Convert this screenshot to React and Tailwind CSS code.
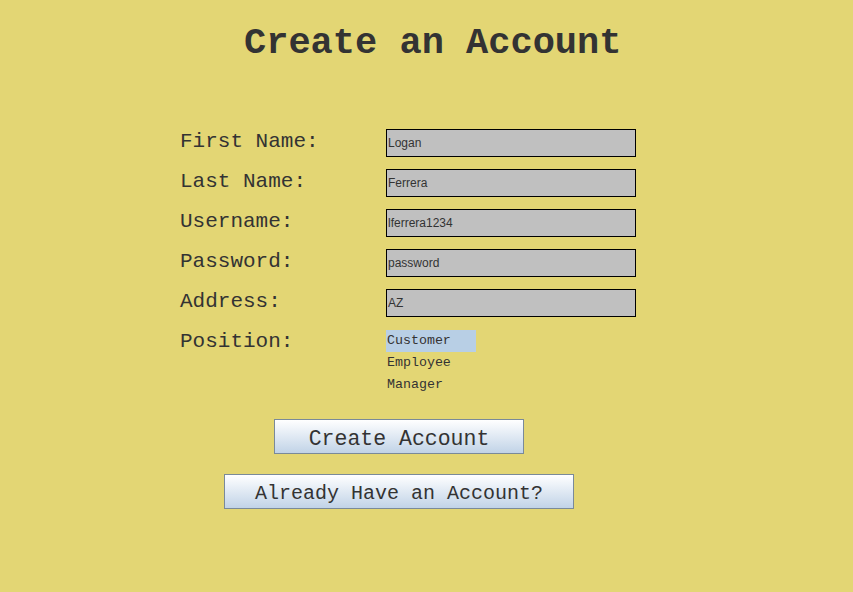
const fields = [
  { label: "First Name:", value: "Logan" },
  { label: "Last Name:", value: "Ferrera" },
  { label: "Username:", value: "lferrera1234" },
  { label: "Password:", value: "password" },
  { label: "Address:", value: "AZ" },
];

const positions = ["Customer", "Employee", "Manager"];

export default function App() {
  return (
    <div className="w-[853px] h-[592px] bg-[#e3d674] text-[#333333] font-['Liberation_Mono',monospace] overflow-hidden">
      <h1 className="pt-[24px] pl-[244px] text-[37px] leading-[38px] font-bold">Create an Account</h1>

      <div className="mt-[67px] pl-[180px] flex flex-col gap-3">
        {fields.map((f) => (
          <div key={f.label} className="flex items-center h-[28px]">
            <span className="w-[206px] text-[21px] leading-[24px] -mt-[2px]">{f.label}</span>
            <div className="w-[250px] h-[28px] border border-black bg-[#c0c0c0] flex items-center pl-[1px] font-['Liberation_Sans',sans-serif] text-[12px]">
              {f.value}
            </div>
          </div>
        ))}

        <div className="flex mt-[1px]">
          <span className="w-[206px] text-[21px] leading-[24px]">Position:</span>
          <ul className="flex flex-col text-[13.3px]">
            {positions.map((p, i) => (
              <li
                key={p}
                className={`h-[22px] w-[90px] pl-[1px] flex items-center ${i === 0 ? "bg-[#b8cfe5]" : ""}`}
              >
                {p}
              </li>
            ))}
          </ul>
        </div>
      </div>

      <div className="mt-[23px] ml-[224px] w-[350px] flex flex-col items-center gap-5">
        <button className="w-[250px] h-[35px] pt-[4px] border border-[#7a8a99] bg-gradient-to-b from-white to-[#c1d3e7] text-[21.5px] leading-[24px] text-[#333333]">
          Create Account
        </button>
        <button className="w-[350px] h-[35px] pt-[4px] border border-[#7a8a99] bg-gradient-to-b from-white to-[#c1d3e7] text-[20px] leading-[24px] text-[#333333]">
          Already Have an Account?
        </button>
      </div>
    </div>
  );
}
